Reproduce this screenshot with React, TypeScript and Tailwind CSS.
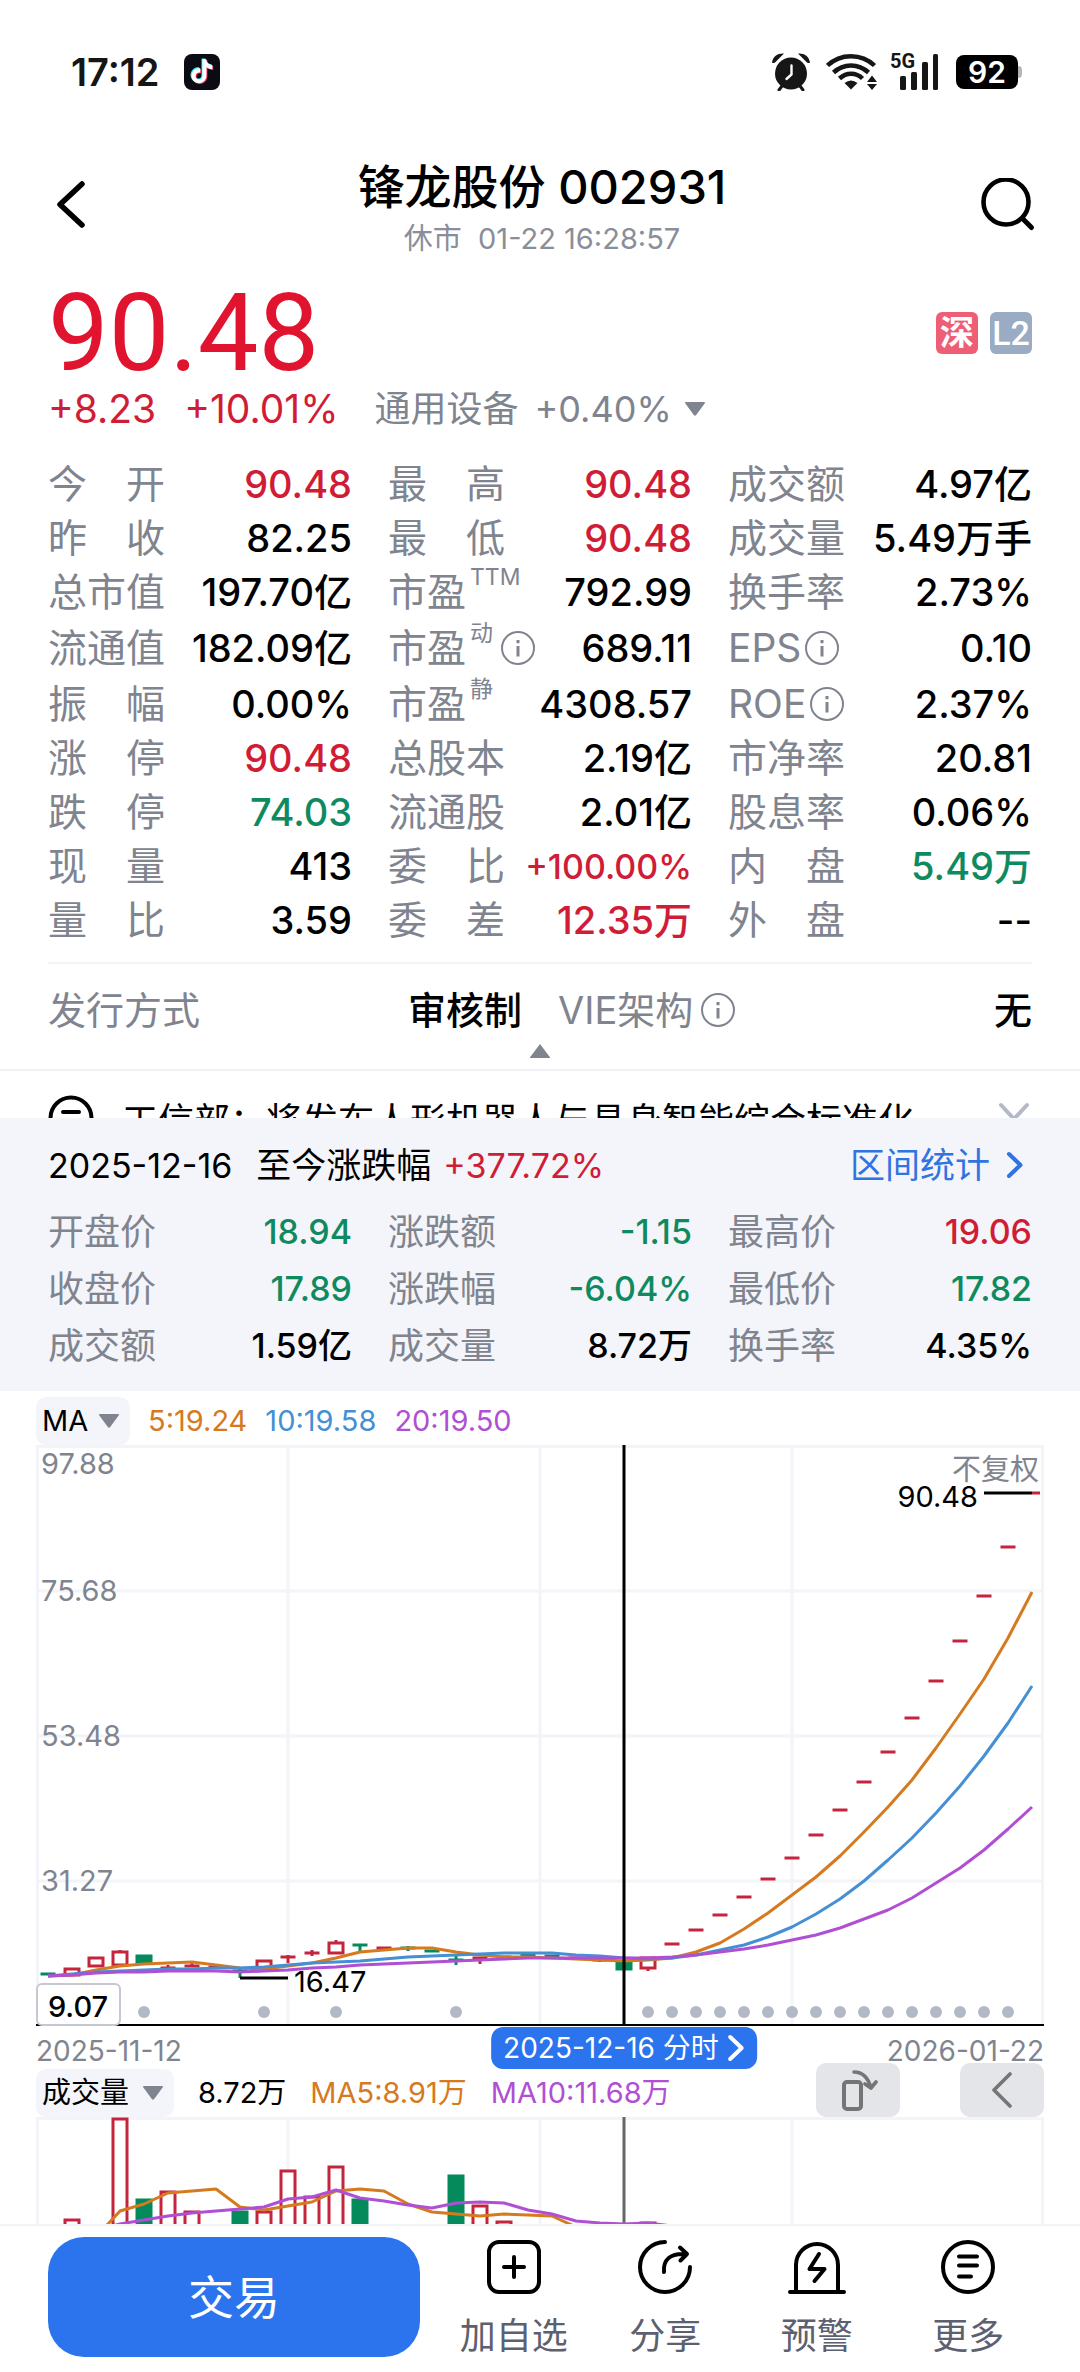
import React, { useState } from 'react';

type Tone = 'up' | 'down' | 'flat';

interface Stat {
  label: string;
  value: string;
  tone?: Tone;
  sup?: string;
  info?: boolean;
}

interface Candle {
  i: number;
  kind: 'up' | 'down';
  top: number;
  bottom?: number;
  wick?: [number, number];
}

const TONES: Record<Tone, string> = {
  up: 'text-[#d01c35]',
  down: 'text-[#0f8a60]',
  flat: 'text-black',
};

const RED = '#c4243c';
const GREEN = '#058a5c';
const ORANGE = '#d57a1f';
const BLUE = '#458fd4';
const PURPLE = '#b04fd4';

const QUOTE: Stat[] = [
  { label: '今开', value: '90.48', tone: 'up' },
  { label: '最高', value: '90.48', tone: 'up' },
  { label: '成交额', value: '4.97亿' },
  { label: '昨收', value: '82.25' },
  { label: '最低', value: '90.48', tone: 'up' },
  { label: '成交量', value: '5.49万手' },
  { label: '总市值', value: '197.70亿' },
  { label: '市盈', value: '792.99', sup: 'TTM' },
  { label: '换手率', value: '2.73%' },
  { label: '流通值', value: '182.09亿' },
  { label: '市盈', value: '689.11', sup: '动', info: true },
  { label: 'EPS', value: '0.10', info: true },
  { label: '振幅', value: '0.00%' },
  { label: '市盈', value: '4308.57', sup: '静' },
  { label: 'ROE', value: '2.37%', info: true },
  { label: '涨停', value: '90.48', tone: 'up' },
  { label: '总股本', value: '2.19亿' },
  { label: '市净率', value: '20.81' },
  { label: '跌停', value: '74.03', tone: 'down' },
  { label: '流通股', value: '2.01亿' },
  { label: '股息率', value: '0.06%' },
  { label: '现量', value: '413' },
  { label: '委比', value: '+100.00%', tone: 'up' },
  { label: '内盘', value: '5.49万', tone: 'down' },
  { label: '量比', value: '3.59' },
  { label: '委差', value: '12.35万', tone: 'up' },
  { label: '外盘', value: '--' },
];

const DAY: Stat[] = [
  { label: '开盘价', value: '18.94', tone: 'down' },
  { label: '涨跌额', value: '-1.15', tone: 'down' },
  { label: '最高价', value: '19.06', tone: 'up' },
  { label: '收盘价', value: '17.89', tone: 'down' },
  { label: '涨跌幅', value: '-6.04%', tone: 'down' },
  { label: '最低价', value: '17.82', tone: 'down' },
  { label: '成交额', value: '1.59亿' },
  { label: '成交量', value: '8.72万' },
  { label: '换手率', value: '4.35%' },
];

// one slot every 24 units, first candle centred at 12
const slotX = (i: number) => 12 + i * 24;

const CANDLES: Candle[] = [
  { i: 0, kind: 'down', top: 529 },
  { i: 1, kind: 'up', top: 524, bottom: 530 },
  { i: 2, kind: 'up', top: 513, bottom: 521 },
  { i: 3, kind: 'up', top: 507, bottom: 520, wick: [505, 507] },
  { i: 4, kind: 'down', top: 511, bottom: 518 },
  { i: 5, kind: 'up', top: 523, wick: [520, 524] },
  { i: 6, kind: 'up', top: 521, wick: [518, 522] },
  { i: 7, kind: 'up', top: 522 },
  { i: 8, kind: 'down', top: 526, wick: [524, 533] },
  { i: 9, kind: 'up', top: 516, bottom: 524 },
  { i: 10, kind: 'up', top: 512, wick: [510, 518] },
  { i: 11, kind: 'up', top: 508, wick: [505, 511] },
  { i: 12, kind: 'up', top: 498, bottom: 508, wick: [495, 498] },
  { i: 13, kind: 'down', top: 500, wick: [499, 507] },
  { i: 14, kind: 'up', top: 503 },
  { i: 15, kind: 'down', top: 503, wick: [501, 506] },
  { i: 16, kind: 'down', top: 506 },
  { i: 17, kind: 'down', top: 515, wick: [511, 520] },
  { i: 18, kind: 'up', top: 513, wick: [512, 519] },
  { i: 19, kind: 'up', top: 512 },
  { i: 20, kind: 'down', top: 510 },
  { i: 21, kind: 'down', top: 511 },
  { i: 22, kind: 'up', top: 513 },
  { i: 23, kind: 'down', top: 515, wick: [513, 517] },
  { i: 24, kind: 'down', top: 517, bottom: 524 },
  { i: 25, kind: 'up', top: 513, bottom: 523, wick: [523, 526] },
];

// consecutive limit-up days from slot 26
const LIMIT_UPS = [499, 485, 470, 452, 434, 413, 390, 365, 337, 307, 273, 236, 196, 151, 102];

const MA5 = [
  531, 530, 525, 521, 519, 518, 517, 520, 523, 524, 521, 518, 513, 507, 505, 503, 503, 507, 510, 512, 512,
  513, 514, 515, 516, 515, 513, 507, 498, 484, 468, 450, 432, 411, 387, 362, 335, 303, 269, 234, 193, 147,
];
const MA10 = [
  531, 529, 527, 526, 525, 524, 524, 523, 523, 522, 520, 518, 517, 516, 514, 512, 511, 510, 509, 508, 508,
  508, 510, 511, 513, 514, 513, 510, 505, 500, 492, 482, 469, 454, 436, 415, 393, 368, 341, 311, 278, 241,
];
const MA20 = [
  531, 530, 528, 527, 527, 526, 526, 526, 527, 526, 525, 523, 522, 520, 519, 518, 517, 516, 515, 514, 513,
  513, 513, 513, 513, 513, 512, 510, 507, 504, 500, 495, 490, 483, 474, 465, 453, 438, 423, 405, 384, 362,
];

const EVENT_DOTS = [4, 9, 12, 17, 25, 26, 27, 28, 29, 30, 31, 32, 33, 34, 35, 36, 37, 38, 39, 40];

const VOLUMES: { i: number; kind: 'up' | 'down'; top: number }[] = [
  { i: 1, kind: 'up', top: 102 },
  { i: 3, kind: 'up', top: 1 },
  { i: 4, kind: 'down', top: 82 },
  { i: 5, kind: 'up', top: 74 },
  { i: 6, kind: 'up', top: 94 },
  { i: 8, kind: 'down', top: 94 },
  { i: 9, kind: 'up', top: 94 },
  { i: 10, kind: 'up', top: 53 },
  { i: 11, kind: 'up', top: 79 },
  { i: 12, kind: 'up', top: 49 },
  { i: 13, kind: 'down', top: 82 },
  { i: 17, kind: 'down', top: 58 },
  { i: 18, kind: 'up', top: 88 },
  { i: 19, kind: 'up', top: 104 },
  { i: 25, kind: 'up', top: 105 },
];

const VOL_MA5 = [150, 140, 120, 94, 87, 76, 74, 72, 90, 93, 89, 85, 74, 72, 74, 87, 95, 97, 99, 97, 98, 99, 110, 120];
const VOL_MA10 = [
  125, 120, 113, 107, 103, 99, 96, 94, 92, 90, 82, 80, 73, 81, 84, 88, 91, 86, 85, 86, 93, 97, 104, 106, 107, 106, 109, 112,
];

const toPoints = (ys: number[]) => ys.map((y, i) => `${slotX(i)},${y}`).join(' ');

const InfoIcon = () => (
  <svg className="w-[34px] h-[34px] shrink-0" viewBox="0 0 34 34" fill="none" stroke="#80848f" strokeWidth="2">
    <circle cx="17" cy="17" r="16" />
    <path d="M17 15v10.5M17 9v3.2" strokeWidth="3" />
  </svg>
);

const Triangle = ({ up = false }: { up?: boolean }) => (
  <svg className="w-[22px] h-[14px] shrink-0" viewBox="0 0 22 14" fill="#80848f">
    {up ? <path d="M11 0 21.500 14H.5z" /> : <path d="M1.800 0h18.400q1.500 0 .6 1.200l-8.600 11.800q-1.200 1.400-2.400 0L1.200 1.200Q.3 0 1.800 0z" />}
  </svg>
);

const StatLabel = ({ stat }: { stat: Stat }) => {
  const spread = stat.label.length === 2 && !stat.sup;
  if (spread) {
    return (
      <dt className="flex w-[117px] justify-between">
        <span>{stat.label[0]}</span>
        <span>{stat.label[1]}</span>
      </dt>
    );
  }
  return (
    <dt className="flex items-center">
      {stat.label}
      {stat.sup && <span className="ml-1 self-start text-[23px] leading-7">{stat.sup}</span>}
      {stat.info && (
        <span className={stat.sup ? 'ml-2' : 'ml-1'}>
          <InfoIcon />
        </span>
      )}
    </dt>
  );
};

const StatusBar = () => (
  <div className="h-[144px] pl-[71px] pr-[58px] flex items-center justify-between text-[#161616]">
    <div className="flex items-center gap-6">
      <span className="text-[38px] leading-none font-semibold">17:12</span>
      <svg className="w-9 h-9" viewBox="0 0 36 36">
        <rect width="36" height="36" rx="8" fill="#0b0b14" />
        {[
          { dx: 5, dy: 4.4, fill: '#25f4ee' },
          { dx: 6.8, dy: 6, fill: '#fe2c55' },
          { dx: 5.9, dy: 5.2, fill: '#ffffff' },
        ].map((n) => (
          <path
            key={n.fill}
            transform={`translate(${n.dx} ${n.dy})`}
            fill={n.fill}
            d="M12.525.02c1.31-.02 2.61-.01 3.91-.02.08 1.53.63 3.09 1.75 4.17 1.12 1.11 2.7 1.62 4.24 1.79v4.03c-1.44-.05-2.89-.35-4.2-.97-.57-.26-1.1-.59-1.62-.93-.01 2.92.01 5.84-.02 8.75-.08 1.4-.54 2.79-1.35 3.94-1.31 1.92-3.58 3.17-5.91 3.21-1.43.08-2.86-.31-4.08-1.03-2.02-1.19-3.44-3.37-3.65-5.71-.02-.5-.03-1-.01-1.49.18-1.9 1.12-3.72 2.58-4.96 1.66-1.44 3.98-2.13 6.15-1.72.02 1.48-.04 2.96-.04 4.44-.99-.32-2.15-.23-3.02.37-.63.41-1.11 1.04-1.36 1.75-.21.51-.15 1.07-.14 1.61.24 1.64 1.82 3.02 3.5 2.87 1.12-.01 2.19-.66 2.77-1.61.19-.33.4-.67.41-1.06.1-1.79.06-3.57.07-5.36.01-4.03-.01-8.05.02-12.07z"
          />
        ))}
      </svg>
    </div>
    <div className="flex items-center">
      <svg className="w-[38px] h-[38px]" viewBox="0 0 38 38" fill="#161616">
        <circle cx="19" cy="20.500" r="16" />
        <path d="M0 9.500C1 3 6 0 12 .5L3 9.500q-1.800 1.200-3 0zM38 9.500C37 3 32 0 26 .5l9 9q1.800 1.200 3 0z" />
        <path d="m10 33-3 4M28 33l3 4" stroke="#161616" strokeWidth="3" strokeLinecap="round" />
        <path d="M19.500 12.500v9l-5 4.500" fill="none" stroke="#fff" strokeWidth="2.400" strokeLinecap="round" />
      </svg>
      <svg className="ml-4 w-[52px] h-[38px]" viewBox="0 0 52 38" fill="none" stroke="#161616" strokeWidth="4.500">
        <path d="M1.500 12.500c13-12.500 34-12.500 47 0" />
        <path d="M7.500 19.500c10-9.500 25-9.500 35 0" />
        <path d="M13.500 25.500c7-6.500 16.500-6.500 23 0" />
        <path d="M25 36.500 18.500 30q6.500-5 13 0z" fill="#161616" stroke="none" />
        <path d="M46 22.500l5 6.500H41zM46 37l5-6H41z" fill="#161616" stroke="none" />
      </svg>
      <div className="ml-3 relative w-[50px] h-[38px]">
        <span className="absolute left-0 top-0 text-[20px] leading-4 font-bold font-['Roboto']">5G</span>
        <svg className="w-full h-full" viewBox="0 0 50 38" fill="#161616">
          <rect x="10" y="23" width="6" height="14" rx="1.500" />
          <rect x="21" y="19" width="6" height="18" rx="1.500" />
          <rect x="32" y="9" width="6" height="28" rx="1.500" />
          <rect x="43" y="1" width="5" height="36" rx="1.500" />
        </svg>
      </div>
      <div className="ml-4 flex items-center">
        <span className="flex h-[34px] w-[62px] items-center justify-center rounded-[8px] bg-black text-[30px] leading-none font-semibold text-white">
          92
        </span>
        <span className="h-3 w-1 rounded-r-full bg-[#b5b5b5]" />
      </div>
    </div>
  </div>
);

const TopNav = () => (
  <header className="h-[124px] pl-12 pr-11 flex items-center justify-between">
    <button type="button" aria-label="返回" className="w-[58px]">
      <svg className="w-[46px] h-[50px]" viewBox="0 0 46 50" fill="none" stroke="#000" strokeWidth="5.500" strokeLinecap="round" strokeLinejoin="round">
        <path d="M34 3 12 23.500 34 44" />
      </svg>
    </button>
    <div className="pt-1 text-center">
      <h1 className="text-[47px] leading-[58px] font-medium text-black">锋龙股份 002931</h1>
      <p className="mt-1 text-[29px] leading-[38px] text-[#8a8e9a]">
        休市&nbsp; 01-22 16:28:57
      </p>
    </div>
    <button type="button" aria-label="搜索" className="flex w-[58px] justify-end">
      <svg className="w-[56px] h-[56px]" viewBox="0 0 56 56" fill="none" stroke="#000" strokeLinecap="round">
        <circle cx="26" cy="24" r="22.500" strokeWidth="4.600" />
        <path d="m43 41 8.500 8.500" strokeWidth="5" />
      </svg>
    </button>
  </header>
);

const PriceChart = () => (
  <svg className="block w-full" viewBox="0 0 1008 581" fill="none">
    <g stroke="#f3f4f9" strokeWidth="3">
      <path d="M0 1.500h1008M0 146h1008M0 291h1008M0 436h1008" />
      <path d="M1.500 0v580M252 0v580M504 0v580M756 0v580M1006.500 0v580" />
    </g>
    <g className="text-[29px]" fill="#80848f">
      <text x="5" y="29">97.88</text>
      <text x="5" y="156">75.68</text>
      <text x="5" y="301">53.48</text>
      <text x="5" y="446">31.27</text>
      <text x="1003" y="35" textAnchor="end">不复权</text>
    </g>
    {CANDLES.map((c) => {
      const x = slotX(c.i);
      const color = c.kind === 'up' ? RED : GREEN;
      return (
        <g key={c.i} stroke={color} strokeWidth="3">
          {c.wick && <path d={`M${x} ${c.wick[0]}V${c.wick[1]}`} />}
          {c.bottom === undefined ? (
            <path d={`M${x - 7.5} ${c.top}h15`} />
          ) : (
            <rect x={x - 7} y={c.top} width="14" height={c.bottom - c.top} fill={c.kind === 'up' ? '#fff' : GREEN} />
          )}
        </g>
      );
    })}
    <g stroke={RED} strokeWidth="3">
      {LIMIT_UPS.map((y, n) => (
        <path key={y} d={`M${slotX(26 + n) - 7.5} ${y}h15`} />
      ))}
      <path d="M996 48h8" />
    </g>
    <g strokeWidth="3" strokeLinejoin="round">
      <polyline points={toPoints(MA5)} stroke={ORANGE} />
      <polyline points={toPoints(MA10)} stroke={BLUE} />
      <polyline points={toPoints(MA20)} stroke={PURPLE} />
    </g>
    <g fill="#b3b9c7">
      {EVENT_DOTS.map((i) => (
        <circle key={i} cx={slotX(i)} cy="567" r="6" />
      ))}
    </g>
    <path d="M948 48h48M204 533h48" stroke="#000" strokeWidth="3" />
    <g className="text-[29px]" fill="#000">
      <text x="942" y="62" textAnchor="end">90.48</text>
      <text x="258" y="547">16.47</text>
    </g>
    <path d="M0 580h1008" stroke="#000" strokeWidth="2" />
    <path d="M588 0v581" stroke="#000" strokeWidth="3" />
    <rect x="1" y="539" width="83" height="41" rx="5" fill="#fff" stroke="#c5c8d2" strokeWidth="2" />
    <text x="42" y="572" textAnchor="middle" fill="#000" className="text-[29px] font-medium">9.07</text>
  </svg>
);

const VolumeChart = () => (
  <svg className="block w-full" viewBox="0 0 1008 107" fill="none">
    <g stroke="#f3f4f9" strokeWidth="3">
      <path d="M0 1.500h1008M1.500 0v107M252 0v107M504 0v107M756 0v107M1006.500 0v107" />
    </g>
    {VOLUMES.map((v) => (
      <rect
        key={v.i}
        x={slotX(v.i) - 7}
        y={v.top + 1}
        width="14"
        height="120"
        strokeWidth="3"
        stroke={v.kind === 'up' ? RED : GREEN}
        fill={v.kind === 'up' ? '#fff' : GREEN}
      />
    ))}
    <path d="M588 0v107" stroke="#666" strokeWidth="3" />
    <g strokeWidth="3" strokeLinejoin="round">
      <polyline points={toPoints(VOL_MA5)} stroke={ORANGE} />
      <polyline points={toPoints(VOL_MA10)} stroke={PURPLE} />
    </g>
  </svg>
);

interface PickerProps {
  label: string;
  options: string[];
  wide?: boolean;
}

const IndicatorPicker = ({ label, options, wide = false }: PickerProps) => {
  const [value, setValue] = useState(options[0]);
  return (
    <label className="relative flex h-12 items-center rounded-[10px] bg-[#f4f5fa]">
      <select
        aria-label={label}
        value={value}
        onChange={(e) => setValue(e.target.value)}
        className={`h-12 appearance-none bg-transparent pl-[6px] text-[29px] text-black outline-none ${wide ? 'w-[138px]' : 'w-[94px]'}`}
      >
        {options.map((o) => (
          <option key={o}>{o}</option>
        ))}
      </select>
      <span className="pointer-events-none absolute right-[10px]">
        <Triangle />
      </span>
    </label>
  );
};

const ACTIONS = [
  {
    name: '加自选',
    icon: (
      <>
        <rect x="4" y="4" width="50" height="50" rx="10" />
        <path d="M29 19v20M19 29h20" />
      </>
    ),
  },
  {
    name: '分享',
    icon: (
      <>
        <path d="M29 4A25 25 0 1 0 54 29" />
        <path d="M28 34c-1-12 6-19 21-18M44 9.500l7 6.500-6.500 6.500" />
      </>
    ),
  },
  {
    name: '预警',
    icon: (
      <>
        <path d="M8 53V27a21 21 0 0 1 42 0v26M2 54h54" />
        <path d="m31 16-9.500 15h15L26.500 43" />
      </>
    ),
  },
  {
    name: '更多',
    icon: (
      <>
        <circle cx="29" cy="29" r="25" />
        <path d="M20 18.500h18M20 27.500h18M20 38.500h12" />
      </>
    ),
  },
];

const BottomBar = () => (
  <nav className="flex h-[148px] border-t-2 border-[#f3f4f7] bg-white pl-12 pr-9">
    <button type="button" className="mt-[11px] h-[120px] w-[372px] shrink-0 rounded-[36px] bg-[#2b74ee] text-[46px] text-white">
      交易
    </button>
    <div className="ml-[18px] grid flex-1 grid-cols-4">
      {ACTIONS.map((a) => (
        <button key={a.name} type="button" className="flex flex-col items-center pt-3">
          <svg className="h-[58px] w-[58px]" viewBox="0 0 58 58" fill="none" stroke="#000" strokeWidth="4" strokeLinecap="round" strokeLinejoin="round">
            {a.icon}
          </svg>
          <span className="mt-4 text-[36px] leading-[48px] text-[#5c6070]">{a.name}</span>
        </button>
      ))}
    </div>
  </nav>
);

const App: React.FC = () => {
  return (
    <div className="min-h-screen overflow-hidden bg-white font-['Inter','Noto_Sans_CJK_SC',sans-serif]">
      <StatusBar />
      <TopNav />

      <main>
        <section className="px-12 pt-3">
          <div className="flex items-center justify-between">
            <span className="font-['Roboto'] text-[108px] leading-[106px] text-[#e0142f]">90.48</span>
            <div className="flex gap-3 text-white">
              <span className="flex h-[42px] w-[42px] items-center justify-center rounded-[6px] bg-[#ee5f76] text-[34px] leading-none font-bold">深</span>
              <span className="flex h-[42px] w-[42px] items-center justify-center rounded-[6px] bg-[#9aabc4] font-['Roboto'] text-[34px] leading-none font-medium">L2</span>
            </div>
          </div>
          <div className="flex h-[46px] items-center leading-[46px]">
            <span className="text-[39px] text-[#d01c35]">+8.23</span>
            <span className="ml-7 text-[39px] text-[#d01c35]">+10.01%</span>
            <button type="button" className="ml-9 flex items-center text-[36px] text-[#80848f]">
              通用设备
              <span className="ml-4 mr-3">+0.40%</span>
              <Triangle />
            </button>
          </div>

          <dl className="mt-[25px] grid grid-cols-3 gap-x-9">
            {QUOTE.map((s, n) => (
              <div
                key={n}
                className={`flex items-center justify-between text-[39px] text-[#80848f] ${n >= 9 && n < 12 ? 'h-[58px]' : 'h-[54px]'}`}
              >
                <StatLabel stat={s} />
                {/* long values drop a size so they clear the label */}
                <dd className={`font-medium ${s.value.length > 7 ? 'text-[34px]' : 'text-[38px]'} ${TONES[s.tone ?? 'flat']}`}>
                  {s.value}
                </dd>
              </div>
            ))}
          </dl>

          <dl className="mt-[15px] grid grid-cols-2 gap-x-9 border-t-2 border-[#f3f4f7] pt-4 text-[38px] leading-[60px]">
            <div className="flex justify-between">
              <dt className="text-[#80848f]">发行方式</dt>
              <dd className="font-medium text-black">审核制</dd>
            </div>
            <div className="flex justify-between">
              <dt className="flex items-center gap-2 text-[#80848f]">
                VIE架构
                <InfoIcon />
              </dt>
              <dd className="font-medium text-black">无</dd>
            </div>
          </dl>
          <button type="button" aria-label="收起" className="mx-auto mt-1 mb-[11px] block">
            <Triangle up />
          </button>
        </section>

        {/* news ticker, half hidden under the day panel */}
        <section className="flex h-[49px] items-start overflow-hidden border-t-2 border-[#f0f1f4] px-12 pt-6">
          <svg className="h-[46px] w-[46px] shrink-0" viewBox="0 0 46 46" fill="none" stroke="#000" strokeWidth="4" strokeLinecap="round">
            <circle cx="23" cy="23" r="20.500" />
            <path d="M15 17h16M15 27h16" />
          </svg>
          <p className="ml-7 flex-1 truncate text-[36px] leading-[52px] text-black">
            工信部：将发布人形机器人与具身智能综合标准化
          </p>
          <button type="button" aria-label="关闭" className="mt-[6px]">
            <svg className="h-9 w-9" viewBox="0 0 36 36" fill="none" stroke="#b3b9c7" strokeWidth="4" strokeLinecap="round">
              <path d="m5 4 26 28M31 4 5 32" />
            </svg>
          </button>
        </section>

        <section className="bg-[#f4f5fa] px-12 pt-5 pb-[17px]">
          <div className="flex h-[54px] items-center text-[35px] text-black">
            <time className="text-[34px]">2025-12-16</time>
            <span className="ml-6">至今涨跌幅</span>
            <span className="ml-3 text-[34px] text-[#d01c35]">+377.72%</span>
            <a href="#range" className="ml-auto flex items-center gap-4 pr-2 text-[#2f74e0]">
              区间统计
              <svg className="h-7 w-[18px]" viewBox="0 0 18 28" fill="none" stroke="currentColor" strokeWidth="4" strokeLinecap="round" strokeLinejoin="round">
                <path d="m3 3 11.500 11L3 25" />
              </svg>
            </a>
          </div>
          <dl className="mt-[11px] grid grid-cols-3 gap-x-9">
            {DAY.map((s) => (
              <div key={s.label} className="flex h-[57px] items-center justify-between text-[#80848f]">
                <dt className="text-[36px]">{s.label}</dt>
                <dd className={`text-[34px] font-medium ${TONES[s.tone ?? 'flat']}`}>{s.value}</dd>
              </div>
            ))}
          </dl>
        </section>

        <section className="px-9 pt-[6px]">
          <div className="flex items-center text-[29px]">
            <IndicatorPicker label="主图指标" options={['MA', 'BOLL', 'EMA']} />
            <span className="ml-[18px] text-[#d57a1f]">5:19.24</span>
            <span className="ml-[18px] text-[#458fd4]">10:19.58</span>
            <span className="ml-[18px] text-[#b04fd4]">20:19.50</span>
          </div>
          <PriceChart />
          <div className="relative flex h-[43px] items-center justify-between pt-[6px] text-[28px] text-[#80848f]">
            <time>2025-11-12</time>
            <time>2026-01-22</time>
            <button
              type="button"
              className="absolute left-[58.33%] top-px flex h-[42px] -translate-x-1/2 items-center gap-2 rounded-[12px] bg-[#2b74ee] px-3 whitespace-nowrap text-[28px] text-white"
            >
              2025-12-16 分时
              <svg className="h-7 w-[18px]" viewBox="0 0 18 28" fill="none" stroke="currentColor" strokeWidth="4" strokeLinecap="round" strokeLinejoin="round">
                <path d="m3 3 11.500 11L3 25" />
              </svg>
            </button>
          </div>

          <div className="flex h-12 items-end text-[29px] leading-[48px]">
            <IndicatorPicker label="副图指标" options={['成交量', 'MACD', 'KDJ']} wide />
            <span className="ml-6 text-black">8.72万</span>
            <span className="ml-6 text-[#d57a1f]">MA5:8.91万</span>
            <span className="ml-6 text-[#b04fd4]">MA10:11.68万</span>
            <div className="ml-auto flex gap-[60px]">
              <button type="button" aria-label="横屏" className="flex h-[54px] w-[84px] items-center justify-center rounded-[10px] bg-[#e4e5e9]">
                <svg className="h-[42px] w-[40px]" viewBox="0 0 40 42" fill="none" stroke="#757575" strokeWidth="4" strokeLinecap="round" strokeLinejoin="round">
                  <rect x="6" y="13" width="17" height="27" rx="3" />
                  <path d="M16 3c8 0 14 5 17 16M33 19l5-6M33 19l-6-4" strokeWidth="3.600" />
                </svg>
              </button>
              <button type="button" aria-label="收起副图" className="flex h-[54px] w-[84px] items-center justify-center rounded-[10px] bg-[#e4e5e9]">
                <svg className="h-9 w-6" viewBox="0 0 24 36" fill="none" stroke="#757575" strokeWidth="3.600" strokeLinecap="round" strokeLinejoin="round">
                  <path d="M20 2 4 18l16 16" />
                </svg>
              </button>
            </div>
          </div>
          <VolumeChart />
        </section>
      </main>

      <BottomBar />
    </div>
  );
};

export default App;
